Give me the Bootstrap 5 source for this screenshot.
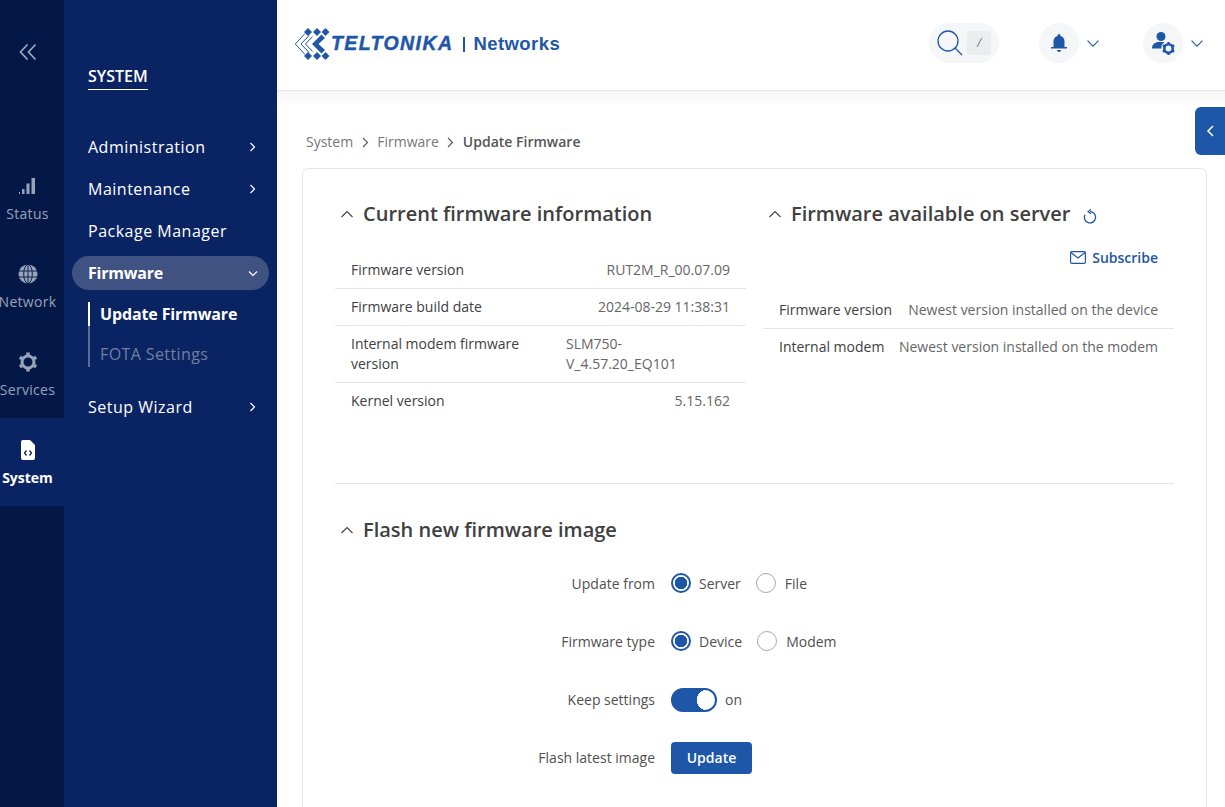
<!DOCTYPE html>
<html lang="en">
<head>
    <meta charset="UTF-8">
    <meta name="viewport" content="width=device-width, initial-scale=1.0">
    <title>Update Firmware - Teltonika Networks</title>
    <link rel="stylesheet" href="https://cdn.jsdelivr.net/npm/bootstrap@5.3.1/dist/css/bootstrap.min.css">
    <style>
        html, body { height: 100%; overflow: hidden; }
        body { font-family: "Open Sans", "Noto Sans", sans-serif; font-size: 14px; color: #404040; background: #fff; }
        .app-shell { height: 807px; overflow: hidden; }

        .rail { width: 64px; background: #041848; flex-shrink: 0; }
        .rail-toggle { height: 154px; padding: 40px 8px 0 0; }
        .rail-item { height: 88px; padding: 22px 8px 0 0; color: #98a3b8; font-size: 14px; letter-spacing: .3px; line-height: 20px; white-space: nowrap; }
        .rail-item svg { display: block; height: 20px; margin-bottom: 8px; }
        .rail-item.is-active { background: #0a2463; color: #fff; font-weight: 700; letter-spacing: 0; }
        .rail-label { margin: 0 -8px; transform: translateX(-.5px); }

        .side-menu { width: 213px; background: #0a2463; color: #fff; flex-shrink: 0; padding: 65px 8px 0; }
        .side-title { margin-left: 16px; display: inline-block; font-size: 16px; font-weight: 600; line-height: 22px; padding-bottom: 2px; border-bottom: 1px solid #fff; margin-bottom: 40px; }
        .side-link { height: 34px; margin-bottom: 8px; padding: 0 13px 0 16px; font-size: 16px; letter-spacing: .5px; border-radius: 17px; }
        .side-link.is-open { background: #3f5282; font-weight: 700; letter-spacing: -.2px; margin-bottom: 12px; padding-right: 11px; }
        .side-sub { margin-left: 16px; border-left: 2px solid #5b6c92; height: 65px; margin-bottom: 23px; position: relative; }
        .side-sub::before { content: ""; position: absolute; left: -2px; top: 0; width: 2px; height: 24px; background: #fff; }
        .side-sub div { padding-left: 10px; font-size: 16px; letter-spacing: .4px; line-height: 24px; margin-bottom: 16px; color: #717fa0; }
        .side-sub .is-current { color: #fff; font-weight: 700; letter-spacing: -.13px; }

        .main-area { min-width: 0; }
        .top-bar { height: 91px; border-bottom: 1px solid #e3e5ea; padding: 0 22px 4px 17px; flex-shrink: 0; }
        .brand-logo { transform: translateY(1px); }
        .brand-name { font-family: "Liberation Sans", Arial, sans-serif; font-weight: 700; font-style: italic; font-size: 19.5px; letter-spacing: 1.4px; color: #1e56a8; margin-left: -3px; -webkit-text-stroke: .4px #1e56a8; }
        .brand-sep { width: 2px; height: 15px; background: #1e56a8; margin: 0 8px 0 10px; }
        .brand-net { font-family: "Liberation Sans", Arial, sans-serif; font-weight: 700; font-size: 18.5px; letter-spacing: .45px; color: #1e56a8; }
        .search-pill { width: 70px; height: 40px; border-radius: 20px; background: #f5f6f7; padding-left: 8px; margin-right: 40px; }
        .search-key { width: 24px; height: 24px; border-radius: 3px; background: #ebecee; color: #777; font-size: 12px; margin-left: 4px; }
        .round-btn { width: 40px; height: 40px; border-radius: 50%; background: #f5f6f7; }
        .head-group { gap: 8px; }
        .head-group + .head-group { margin-left: 44px; }

        .page-body { position: relative; flex: 1; padding: 40px 18px 0 25px; background: linear-gradient(#f6f6f7, #fff 15px); }
        .panel-tab { position: absolute; right: 0; top: 16px; width: 30px; height: 48px; background: #1e56a8; border-radius: 6px 0 0 6px; }
        .crumbs { height: 22px; line-height: 22px; margin: 0 0 15px 4px; color: #777; gap: 8.5px; }
        .crumbs b { color: #555; font-weight: 600; }
        .main-panel { border: 1px solid #e2e5ec; border-radius: 6px 6px 0 0; padding: 30px 32px 0; height: 700px; background: #fff; }
        .sect-title { font-size: 20px; font-weight: 600; line-height: 30px; color: #404040; gap: 9px; margin: 0; padding-left: 5px; }
        .info-row { padding: 8px 16px; line-height: 20px; border-bottom: 1px solid #e2e5ec; }
        .info-row:last-child { border-bottom: 0; }
        .info-row span:last-child { color: #666; }
        .info-col { width: 411px; }
        .info-list { margin-top: 23px; }
        .subscribe { height: 24px; margin: 16px 16px 23px 0; color: #1e56a8; font-weight: 600; gap: 6px; }
        .flash-divider { border-top: 1px solid #e2e5ec; margin: 0; opacity: 1; }
        .flash-title { margin: 31px 0 9px; }
        .flash-row { height: 58px; }
        .flash-label { width: 336px; text-align: right; padding-right: 16px; flex-shrink: 0; color: #505050; }
        .flash-field { gap: 15px; color: #505050; }
        .flash-field .form-check { margin: 0; padding: 0; min-height: 0; display: flex; align-items: center; gap: 8px; }
        .flash-field .form-check + .form-check { gap: 9px; }
        .flash-field .form-check-input[type=radio] { float: none; margin: 0; width: 20px; height: 20px; border: 1px solid #a9a9b0; }
        .flash-field .form-check-input:checked { background-color: #fff; border: 2px solid #1e56a8; background-image: radial-gradient(circle, #1e56a8 0 6px, transparent 6.5px); }
        .flash-field .form-switch .form-check-input { float: none; margin: 2px 0 0; width: 46px; height: 24px; background-color: #1e56a8; border-color: #1e56a8; background-image: radial-gradient(circle at 34px 50%, #fff 0 10px, transparent 10.5px); }
        .btn-flash { background: #1e56a8; border: 0; color: #fff; font-size: 14px; font-weight: 600; width: 81px; height: 32px; padding: 0 0 2px; margin-top: 2px; border-radius: 4px; }
        .btn-flash:hover { background: #1e56a8; color: #fff; }
        .refresh-icon { margin: 4px 0 0 4px; }
    </style>
</head>
<body>
<div class="app-shell d-flex">

    <nav class="rail">
        <div class="rail-toggle text-center">
            <svg width="20" height="18" viewBox="0 0 20 18" fill="none" stroke="#a3adc0" stroke-width="1.6"><path d="M9.500 1.500 2.500 9l7 7.500M17.500 1.500 10.500 9l7 7.500"/></svg>
        </div>
        <div class="rail-item text-center">
            <svg class="mx-auto" width="18" height="20" viewBox="1.500 0 18 20" fill="#98a3b8"><path d="M0 18v-2h2.500v2zM4.500 18v-5H7v5zM9 18V7.500h3V18zM14 18V2h3.500v16z"/></svg>
            <div class="rail-label">Status</div>
        </div>
        <div class="rail-item text-center">
            <svg class="mx-auto" width="20" height="20" viewBox="0 0 20 20" fill="#98a3b8" stroke="#041848" stroke-width=".9"><circle cx="10" cy="10" r="9.500" stroke="none"/><ellipse cx="10" cy="10" rx="4.300" ry="9.500" fill="none"/><path d="M10 .5v19M1 7h18M1 13h18" fill="none"/></svg>
            <div class="rail-label">Network</div>
        </div>
        <div class="rail-item text-center">
            <svg class="mx-auto" width="20" height="20" viewBox="0 0 20 20" fill="none" stroke="#98a3b8"><circle cx="10" cy="10" r="6" stroke-width="3"/><path d="M10 .5v3M10 16.500v3M1.800 5.300l2.600 1.500M15.600 13.200l2.600 1.500M1.800 14.700l2.600-1.500M15.600 6.800l2.600-1.500" stroke-width="3.500"/></svg>
            <div class="rail-label">Services</div>
        </div>
        <div class="rail-item is-active text-center">
            <svg class="mx-auto" width="14" height="20" viewBox="0 0 14 20"><path d="M2 0h7l5 5v13a2 2 0 0 1-2 2H2a2 2 0 0 1-2-2V2a2 2 0 0 1 2-2z" fill="#fff"/><path d="M5.500 10.500 3.500 13l2 2.500M8.500 10.500l2 2.500-2 2.500" fill="none" stroke="#0a2463" stroke-width="1.300"/></svg>
            <div class="rail-label">System</div>
        </div>
    </nav>

    <aside class="side-menu">
        <div class="side-title">SYSTEM</div>
        <div class="side-link d-flex align-items-center justify-content-between">Administration
            <svg width="7" height="10" viewBox="0 0 7 10" fill="none" stroke="#fff" stroke-width="1.200"><path d="m1.500 1 4 4-4 4"/></svg>
        </div>
        <div class="side-link d-flex align-items-center justify-content-between">Maintenance
            <svg width="7" height="10" viewBox="0 0 7 10" fill="none" stroke="#fff" stroke-width="1.200"><path d="m1.500 1 4 4-4 4"/></svg>
        </div>
        <div class="side-link d-flex align-items-center">Package Manager</div>
        <div class="side-link is-open d-flex align-items-center justify-content-between">Firmware
            <svg width="10" height="7" viewBox="0 0 10 7" fill="none" stroke="#fff" stroke-width="1.200"><path d="m1 1.500 4 4 4-4"/></svg>
        </div>
        <div class="side-sub">
            <div class="is-current">Update Firmware</div>
            <div>FOTA Settings</div>
        </div>
        <div class="side-link d-flex align-items-center justify-content-between">Setup Wizard
            <svg width="7" height="10" viewBox="0 0 7 10" fill="none" stroke="#fff" stroke-width="1.200"><path d="m1.500 1 4 4-4 4"/></svg>
        </div>
    </aside>

    <div class="main-area flex-grow-1 d-flex flex-column">
        <header class="top-bar d-flex align-items-center">
            <div class="brand-logo d-flex align-items-center">
                <svg width="40" height="32" viewBox="0 0 40 32">
                    <g fill="#1e56a8">
                        <path d="m14 0 4 4-4 4-4-4zM23 0l4 4-4 4-4-4zM31.500 0l4 4-4 4-4-4zM14 24l4 4-4 4-4-4zM23 24l4 4-4 4-4-4zM31.500 24l4 4-4 4-4-4z"/>
                        <path d="m27.500 6.500 3.500 3.500-6.500 6 6.500 6-3.500 3.500-9.500-9.500z"/>
                    </g>
                    <path d="M9.500 5.500-.2 16l9.700 10.500M13.500 7.500 5.500 16l8 8.500M17 8.500 10 16l7 7.500" transform="translate(1.500 0)" fill="none" stroke="#1e56a8" stroke-width="1"/>
                </svg>
                <span class="brand-name">TELTONIKA</span>
                <span class="brand-sep"></span>
                <span class="brand-net">Networks</span>
            </div>
            <div class="ms-auto d-flex align-items-center">
                <div class="search-pill d-flex align-items-center">
                    <svg width="26" height="26" viewBox="0 0 26 26" fill="none" stroke="#1e56a8" stroke-width="1.300"><circle cx="11" cy="11" r="10"/><path d="m18 18 7 7"/></svg>
                    <span class="search-key d-flex align-items-center justify-content-center"><i>/</i></span>
                </div>
                <div class="head-group d-flex align-items-center">
                    <span class="round-btn d-flex align-items-center justify-content-center">
                        <svg width="16" height="19" viewBox="0 0 16 19" fill="#1e56a8"><path d="M8 0a1.500 1.500 0 0 1 1.500 1.500v.4A5.500 5.500 0 0 1 13.500 7.200V13H16v1.500H0V13h2.500V7.200A5.500 5.500 0 0 1 6.500 1.900v-.4A1.500 1.500 0 0 1 8 0zM6 16h4a2 2 0 0 1-4 0z"/></svg>
                    </span>
                    <svg width="12" height="7" viewBox="0 0 12 7" fill="none" stroke="#1e56a8" stroke-width="1.100"><path d="m.5.7 5.500 5.500L11.500.7"/></svg>
                </div>
                <div class="head-group d-flex align-items-center">
                    <span class="round-btn d-flex align-items-center justify-content-center">
                        <svg width="24" height="24" viewBox="0 0 24 24" fill="#1e56a8"><circle cx="10" cy="5.500" r="4.500"/><path d="M1 17.500c0-4 3-6.500 7-6.500h4c.5 0 1 .1 1.500.2A6 6 0 0 0 10.500 17.500z"/><circle cx="17.500" cy="17.500" r="4.200" fill="none" stroke="#1e56a8" stroke-width="2.600"/><path d="M17.500 11v3M17.500 21v3M11.800 14.200l2.600 1.500M20.600 19.300l2.600 1.500M11.800 20.800l2.600-1.500M20.600 15.700l2.600-1.500" stroke="#1e56a8" stroke-width="2.200"/></svg>
                    </span>
                    <svg width="12" height="7" viewBox="0 0 12 7" fill="none" stroke="#1e56a8" stroke-width="1.100"><path d="m.5.7 5.500 5.500L11.500.7"/></svg>
                </div>
            </div>
        </header>

        <main class="page-body">
            <div class="panel-tab d-flex align-items-center justify-content-center">
                <svg width="9" height="14" viewBox="0 0 9 14" fill="none" stroke="#fff" stroke-width="1.500"><path d="M7 2 2 7l5 5"/></svg>
            </div>
            <div class="crumbs d-flex align-items-center">
                <span>System</span>
                <svg width="7" height="11" viewBox="0 0 7 11" fill="none" stroke="#555" stroke-width="1.100"><path d="m1 1 4.500 4.500L1 10"/></svg>
                <span>Firmware</span>
                <svg width="7" height="11" viewBox="0 0 7 11" fill="none" stroke="#555" stroke-width="1.100"><path d="m1 1 4.500 4.500L1 10"/></svg>
                <b>Update Firmware</b>
            </div>

            <section class="main-panel">
                <div class="d-flex justify-content-between" style="height:284px">
                    <div class="info-col">
                        <h2 class="sect-title d-flex align-items-center">
                            <svg width="14" height="8" viewBox="0 0 14 8" fill="none" stroke="#404040" stroke-width="1.100"><path d="m1.500 7 5.500-5.500L12.500 7"/></svg>
                            Current firmware information
                        </h2>
                        <div class="info-list">
                            <div class="info-row d-flex justify-content-between"><span>Firmware version</span><span>RUT2M_R_00.07.09</span></div>
                            <div class="info-row d-flex justify-content-between"><span>Firmware build date</span><span>2024-08-29 11:38:31</span></div>
                            <div class="info-row d-flex justify-content-between"><span style="width:190px">Internal modem firmware version</span><span style="width:164px">SLM750-V_4.57.20_EQ101</span></div>
                            <div class="info-row d-flex justify-content-between"><span>Kernel version</span><span>5.15.162</span></div>
                        </div>
                    </div>
                    <div class="info-col">
                        <h2 class="sect-title d-flex align-items-center">
                            <svg width="14" height="8" viewBox="0 0 14 8" fill="none" stroke="#404040" stroke-width="1.100"><path d="m1.500 7 5.500-5.500L12.500 7"/></svg>
                            Firmware available on server
                            <svg class="refresh-icon" width="14" height="15" viewBox="0 0 14 15" fill="none" stroke="#1e56a8" stroke-width="1.300"><path d="M7 2.700a5.600 5.600 0 1 1-5 3"/><path d="M8 .3 5 2.700l3 2.100" stroke-width="1.100"/></svg>
                        </h2>
                        <div class="subscribe d-flex align-items-center justify-content-end">
                            <svg width="16" height="13" viewBox="0 0 16 13" fill="none" stroke="#1e56a8" stroke-width="1.200"><rect x=".6" y=".6" width="14.800" height="11.800" rx="1.200"/><path d="m1 1.500 7 5.500 7-5.500"/></svg>
                            Subscribe
                        </div>
                        <div class="info-row d-flex justify-content-between"><span>Firmware version</span><span>Newest version installed on the device</span></div>
                        <div class="info-row d-flex justify-content-between"><span>Internal modem</span><span>Newest version installed on the modem</span></div>
                    </div>
                </div>
                <hr class="flash-divider">
                <h2 class="sect-title flash-title d-flex align-items-center">
                    <svg width="14" height="8" viewBox="0 0 14 8" fill="none" stroke="#404040" stroke-width="1.100"><path d="m1.500 7 5.500-5.500L12.500 7"/></svg>
                    Flash new firmware image
                </h2>
                <div class="flash-row d-flex align-items-center">
                    <div class="flash-label">Update from</div>
                    <div class="flash-field d-flex align-items-center">
                        <div class="form-check"><input class="form-check-input" type="radio" name="source" id="srcServer" checked><label class="form-check-label" for="srcServer">Server</label></div>
                        <div class="form-check"><input class="form-check-input" type="radio" name="source" id="srcFile"><label class="form-check-label" for="srcFile">File</label></div>
                    </div>
                </div>
                <div class="flash-row d-flex align-items-center">
                    <div class="flash-label">Firmware type</div>
                    <div class="flash-field d-flex align-items-center">
                        <div class="form-check"><input class="form-check-input" type="radio" name="fwtype" id="typeDevice" checked><label class="form-check-label" for="typeDevice">Device</label></div>
                        <div class="form-check"><input class="form-check-input" type="radio" name="fwtype" id="typeModem"><label class="form-check-label" for="typeModem">Modem</label></div>
                    </div>
                </div>
                <div class="flash-row d-flex align-items-center">
                    <div class="flash-label">Keep settings</div>
                    <div class="flash-field d-flex align-items-center">
                        <div class="form-check form-switch"><input class="form-check-input" type="checkbox" id="keepSettings" checked><label class="form-check-label" for="keepSettings">on</label></div>
                    </div>
                </div>
                <div class="flash-row d-flex align-items-center">
                    <div class="flash-label">Flash latest image</div>
                    <button type="button" class="btn btn-flash">Update</button>
                </div>
            </section>
        </main>
    </div>
</div>
<script src="https://cdn.jsdelivr.net/npm/bootstrap@5.3.1/dist/js/bootstrap.bundle.min.js"></script>
</body>
</html>
